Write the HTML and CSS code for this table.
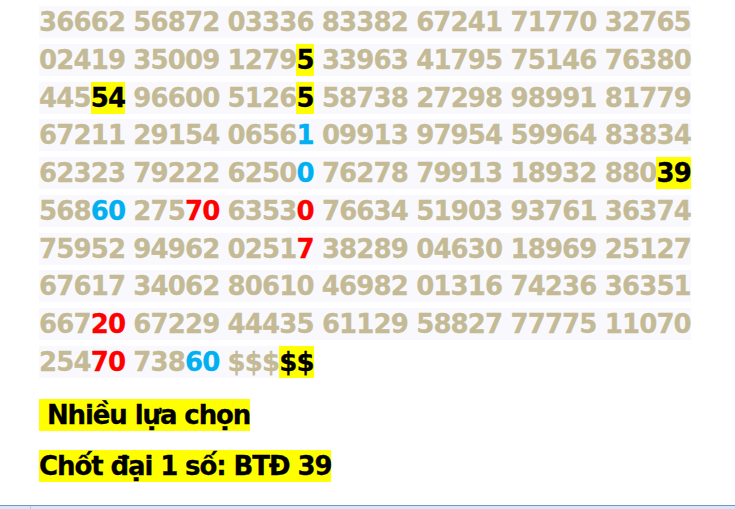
FILE: index.html
```html
<!DOCTYPE html>
<html lang="vi">
<head>
    <meta charset="UTF-8">
    <meta name="viewport" content="width=device-width, initial-scale=1.0">
    <title>Dàn số</title>
    <link rel="stylesheet" href="styles.css">
</head>
<body>
    <div class="page">
        <div class="content">
            <!-- Bảng số -->
            <div class="numbers">
                <div class="row"><span class="line">36662 56872 03336 83382 67241 71770 32765</span></div>
                <div class="row"><span class="line">02419 35009 1279<span class="hl">5</span> 33963 41795 75146 76380</span></div>
                <div class="row"><span class="line">445<span class="hl">54</span> 96600 5126<span class="hl">5</span> 58738 27298 98991 81779</span></div>
                <div class="row"><span class="line">67211 29154 0656<span class="blue">1</span> 09913 97954 59964 83834</span></div>
                <div class="row"><span class="line">62323 79222 6250<span class="blue">0</span> 76278 79913 18932 880<span class="hl">39</span></span></div>
                <div class="row"><span class="line">568<span class="blue">60</span> 275<span class="red">70</span> 6353<span class="red">0</span> 76634 51903 93761 36374</span></div>
                <div class="row"><span class="line">75952 94962 0251<span class="red">7</span> 38289 04630 18969 25127</span></div>
                <div class="row"><span class="line">67617 34062 80610 46982 01316 74236 36351</span></div>
                <div class="row"><span class="line">667<span class="red">20</span> 67229 44435 61129 58827 77775 11070</span></div>
                <div class="row"><span class="line">254<span class="red">70</span> 738<span class="blue">60</span> $$$<span class="hl">$$</span></span></div>
            </div>

            <p class="note"><span class="mark">&nbsp;Nhiều lựa chọn</span></p>
            <p class="note"><span class="mark">Chốt đại 1 số: BTĐ 39</span></p>
        </div>

        <div class="statusbar"><div class="status-cell"></div></div>
    </div>
</body>
</html>
```

FILE: styles.css
```css
body {
    margin: 0;
    padding: 0;
    background-color: #fff;
    font-family: "DejaVu Sans", Verdana, sans-serif;
    font-weight: bold;
}

.page {
    height: 509px;
    display: flex;
    flex-direction: column;
}

.content {
    padding: 4px 0 0 39px;
}

.numbers {
    font-size: 26px;
    line-height: 37.75px;
    letter-spacing: -0.87px;
    color: #c4bb96;
    white-space: nowrap;
    -webkit-text-stroke: 0.3px currentColor;
}

.line {
    background-color: #f9f9fd;
    padding: 1px 0;
}

.hl {
    background-color: #ffff00;
    color: #000;
    padding: 1px 0;
}

.blue {
    color: #00b0f0;
}

.red {
    color: #ff0000;
}

.note {
    margin: 15px 0 0 0;
    font-size: 26px;
    line-height: 37.75px;
    letter-spacing: -1.1px;
    color: #000;
    -webkit-text-stroke: 0.3px #000;
}

.note + .note {
    margin-top: 14px;
}

.mark {
    background-color: #ffff00;
    padding: 1px 0;
}

/* thanh trạng thái dưới cùng */
.statusbar {
    margin-top: auto;
    height: 3px;
    border-top: 1px solid #6f96cf;
    background-color: #d7e5f6;
}

.status-cell {
    width: 30px;
    height: 3px;
    border-right: 1px solid #b9cbe3;
}
```
